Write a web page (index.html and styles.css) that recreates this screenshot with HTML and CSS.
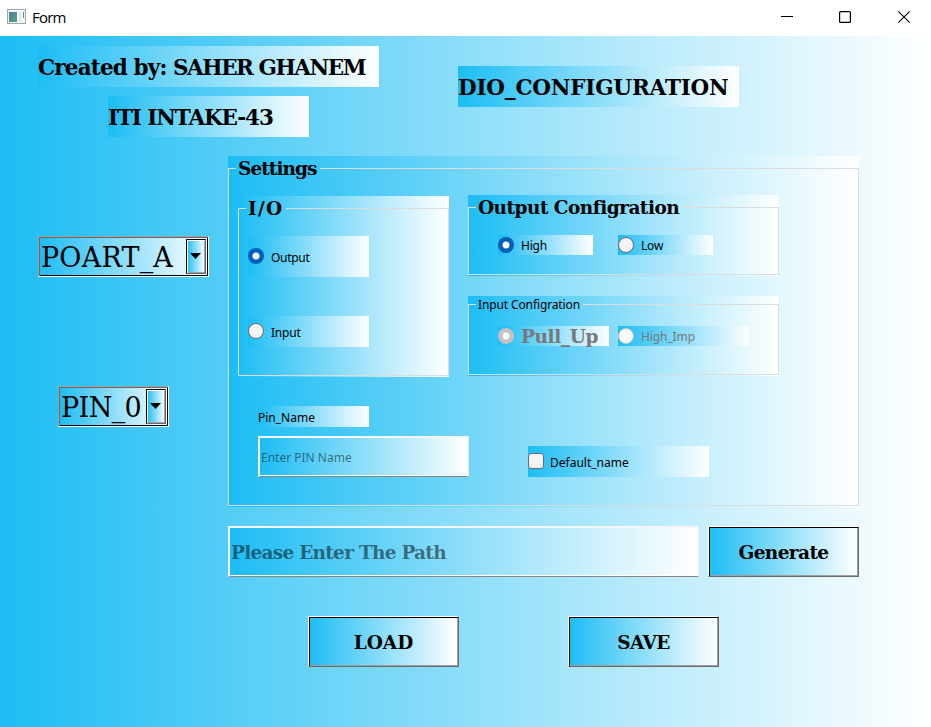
FILE: index.html
```html
<!DOCTYPE html>
<html lang="en">
<head>
<meta charset="utf-8">
<title>Form</title>
<link rel="stylesheet" href="styles.css">
</head>
<body>
<div class="titlebar">
  <svg class="app-icon" width="20" height="16" viewBox="0 0 20 16">
    <defs><linearGradient id="pane" x1="0" y1="0" x2="1" y2="1"><stop offset="0" stop-color="#4b79a5"/><stop offset="1" stop-color="#52ac7c"/></linearGradient></defs>
    <rect x=".5" y=".5" width="18" height="14" fill="#f5f5f5" stroke="#a3a7ad"/>
    <rect x="2" y="3" width="8" height="10" fill="url(#pane)"/>
    <rect x="12" y="3" width="2" height="10" fill="#e6e6e6"/>
    <rect x="16" y="3" width="1" height="6" fill="#5597a0"/>
  </svg>
  <span class="caption">Form</span>
  <svg class="controls" width="132" height="14" viewBox="0 0 132 14" fill="none" stroke="#000">
    <path d="M1 6.5h12"/>
    <rect x="59.6" y="1.6" width="10.8" height="10.8" rx="1" stroke-width="1.2"/>
    <path d="M118.3 1.3l11.4 11.4M129.7 1.3L118.3 12.7" stroke-width="1.1"/>
  </svg>
</div>
<main class="form">
  <header class="heading">
    <div class="credits">
      <div class="tag tag-author"><span class="t-by">Created by:</span> <span class="t-author">SAHER GHANEM</span></div>
      <div class="tag tag-intake"><span class="t-intake">ITI INTAKE-43</span></div>
    </div>
    <div class="tag tag-title"><span class="t-title">DIO_CONFIGURATION</span></div>
  </header>
  <div class="body">
    <div class="selectors">
      <div class="combo combo-port"><span class="t-port">POART_A</span><span class="drop"><svg width="12" height="6" viewBox="0 0 12 6"><path d="M0 0h11L5.500 6z"/></svg></span></div>
      <div class="combo combo-pin"><span class="t-pin">PIN_0</span><span class="drop"><svg width="12" height="6" viewBox="0 0 12 6"><path d="M0 0h11L5.500 6z"/></svg></span></div>
    </div>
    <div class="work">
      <div class="group group-settings"><fieldset>
        <legend class="t-settings">Settings</legend>
        <div class="columns">
          <div class="group group-io"><fieldset>
            <legend class="t-io">I/O</legend>
            <label class="option opt-output"><i class="radio on"></i><span class="t-output">Output</span></label>
            <label class="option opt-input"><i class="radio"></i><span class="t-input">Input</span></label>
          </fieldset></div>
          <div class="configs">
            <div class="group group-out"><fieldset>
              <legend class="t-outcfg">Output Configration</legend>
              <div class="pair">
                <label class="option opt-level"><i class="radio on"></i><span class="t-high">High</span></label>
                <label class="option opt-level"><i class="radio"></i><span class="t-low">Low</span></label>
              </div>
            </fieldset></div>
            <div class="group group-in"><fieldset>
              <legend class="t-incfg">Input Configration</legend>
              <div class="pair disabled">
                <label class="option opt-pull"><i class="radio on"></i><span class="t-pull">Pull_Up</span></label>
                <label class="option opt-imp"><i class="radio"></i><span class="t-imp">High_Imp</span></label>
              </div>
            </fieldset></div>
          </div>
        </div>
        <div class="naming">
          <div class="pin-field">
            <div class="pin-label"><span class="t-pinname">Pin_Name</span></div>
            <div class="entry entry-pin"><span class="t-enterpin">Enter PIN Name</span></div>
          </div>
          <label class="option opt-default"><i class="check"></i><span class="t-default">Default_name</span></label>
        </div>
      </fieldset></div>
      <div class="path-row">
        <div class="entry entry-path"><span class="t-path">Please Enter The Path</span></div>
        <button class="btn"><span class="t-generate">Generate</span></button>
      </div>
      <div class="actions">
        <button class="btn"><span class="t-load">LOAD</span></button>
        <button class="btn"><span class="t-save">SAVE</span></button>
      </div>
    </div>
  </div>
</main>
</body>
</html>
```
FILE: styles.css
```css
:root {
  --sky: linear-gradient(90deg, #1cbdf4, #fff);
  --slab: "DejaVu Serif", serif;
}
* { box-sizing: border-box; }
body {
  margin: 0;
  width: 931px;
  height: 727px;
  overflow: hidden;
  font: 12px "Noto Sans", sans-serif;
  color: #000;
  background: #fff;
}
span, legend { white-space: nowrap; }
.titlebar {
  display: flex;
  align-items: center;
  height: 36px;
  padding: 0 19px 2px 7px;
}
.caption { margin-left: 5px; font: 15px "Open Sans", sans-serif; letter-spacing: -.8px; }
.controls { margin-left: auto; }
.form { height: 691px; padding: 10px 72px 0 38px; background: var(--sky); }
.heading { display: flex; height: 110px; }
.credits { width: 420px; }
.tag {
  height: 41px;
  background: var(--sky);
  font: bold 21.5px/43px var(--slab);
}
.tag-author { width: 341px; letter-spacing: -1.1px; }
.t-by { letter-spacing: -.82px; }
.t-author { letter-spacing: -1.45px; }
.tag-intake { width: 201px; margin: 9px 0 0 70px; letter-spacing: -1.1px; }
.tag-title { width: 281px; margin-top: 20px; letter-spacing: -.2px; }
.body { display: flex; }
.selectors { width: 190px; padding-top: 80px; }
.combo {
  display: flex;
  justify-content: space-between;
  height: 41px;
  padding: 1px 1px 1px 2px;
  border: 1px solid;
  border-color: #a0a0a0 #fff #fff #a0a0a0;
  box-shadow: inset 1px 1px #696969, inset -1px -1px #000;
  background: var(--sky);
  font: 27px/39px var(--slab);
}
.combo-port { width: 171px; letter-spacing: .2px; }
.combo-pin { width: 111px; margin: 109px 0 0 20px; letter-spacing: -.6px; }
.drop {
  display: flex;
  align-items: center;
  justify-content: center;
  width: 20px;
  height: 35px;
  margin: 1px 1px 0 0;
  border: 1px solid;
  border-color: #000 #696969 #696969 #000;
  box-shadow: inset 1px 1px #fff, inset -1px -1px #a0a0a0;
  background: var(--sky);
}
.drop svg { position: relative; top: -1px; }
.group { background: var(--sky); padding-bottom: 1px; }
fieldset {
  height: 100%;
  min-width: 0;
  margin: 0;
  padding: 0;
  border: 1px solid #dcdcdc;
}
legend {
  height: 25px;
  margin-left: 7px;
  padding: 0 3px 0 2px;
  font: bold 18.5px/25px var(--slab);
}
.t-settings { letter-spacing: -.95px; padding-right: 4px; }
.t-io { letter-spacing: 1.3px; }
.t-outcfg { letter-spacing: -.52px; }
.t-pull { letter-spacing: -.4px; }
.group-settings { width: 631px; height: 351px; }
.columns { display: flex; gap: 19px; padding: 15px 0 0 9px; }
.group-io { width: 211px; height: 181px; }
.configs { margin-top: -1px; }
.group-out { width: 311px; height: 81px; }
.group-in { width: 311px; height: 80px; margin-top: 20px; }
.group-in legend { height: 17px; font: 12px/17px "Noto Sans", sans-serif; letter-spacing: -.12px; }
.option {
  display: flex;
  align-items: center;
  gap: 7px;
  height: 20px;
  background: var(--sky);
}
.option span { position: relative; top: 1px; }
.opt-output { width: 121px; height: 41px; margin: 15px 0 0 9px; padding-bottom: 1px; letter-spacing: -.3px; }
.opt-input { width: 121px; height: 31px; margin: 39px 0 0 9px; padding-bottom: 1px; letter-spacing: -.2px; }
.pair { display: flex; gap: 25px; padding: 15px 0 0 29px; }
.group-in .pair { gap: 9px; padding-top: 13px; }
.opt-level { width: 95px; letter-spacing: -.2px; }
.option.opt-level span, .option.opt-imp span { top: 0; }
.opt-pull { width: 111px; font: bold 18.5px/20px var(--slab); }
.opt-imp { width: 131px; letter-spacing: -.1px; }
.opt-default { width: 181px; height: 31px; gap: 6px; padding-bottom: 1px; }
.radio, .check {
  flex: none;
  width: 16px;
  height: 16px;
  border: 1px solid #6b6b6b;
  border-radius: 50%;
  background: #f3f3f3;
}
.check { border-radius: 3px; }
.radio.on {
  border: 0;
  background: radial-gradient(circle, #fff 3px, #005fb8 4px);
}
.disabled { color: #787878; }
.disabled .radio { border-color: #c3c3c3; background: #fafafa; }
.disabled .radio.on { background: radial-gradient(circle, #fff 3px, #c3c3c3 4px); }
.naming { display: flex; align-items: flex-end; gap: 59px; padding: 29px 0 0 29px; }
.pin-label { width: 111px; height: 21px; line-height: 23px; background: var(--sky); }
.entry {
  display: flex;
  align-items: center;
  padding-left: 1px;
  border: 2px solid;
  border-color: #f6f6f6 #ececec #868686 #f6f6f6;
  border-bottom-width: 1px;
  border-right-width: 1px;
  box-shadow: inset 0 -1px #fff;
  background: var(--sky) padding-box;
  color: rgba(0, 0, 0, .5);
}
.entry-pin { width: 211px; height: 41px; margin-top: 9px; }
.entry-path { width: 471px; height: 51px; font: bold 18.5px var(--slab); letter-spacing: -.73px; }
.path-row { display: flex; gap: 9px; margin-top: 19px; }
.btn {
  width: 151px;
  height: 51px;
  padding: 2px 0 0;
  border: 1px solid;
  border-color: #fff #696969 #696969 #fff;
  box-shadow: inset 1px 1px #000, inset -1px -1px #a0a0a0;
  background: var(--sky);
  color: #000;
  font: bold 18.5px var(--slab);
}
.t-generate { letter-spacing: -.6px; }
.t-save { letter-spacing: -.6px; }
.actions { display: flex; gap: 109px; margin: 39px 0 0 80px; }
```
